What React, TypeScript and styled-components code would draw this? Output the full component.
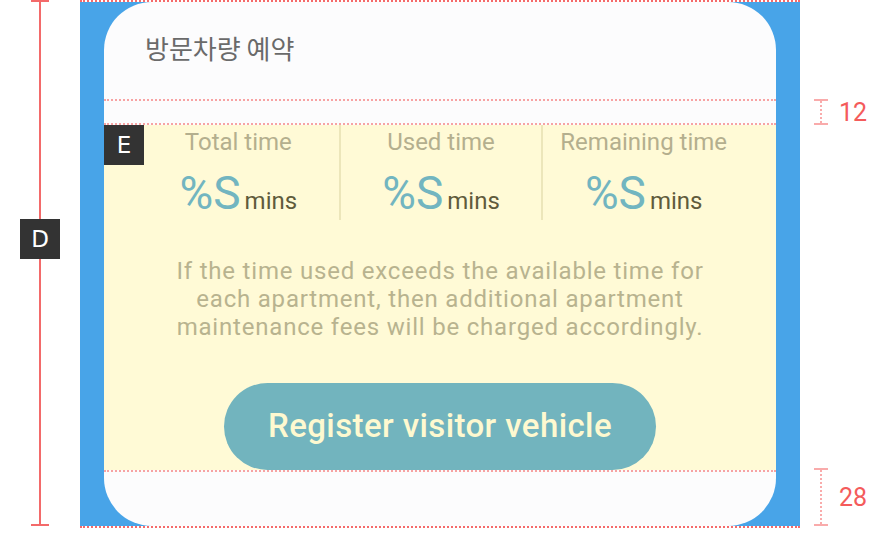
import React from "react";
import styled, { createGlobalStyle } from "styled-components";

const Global = createGlobalStyle`
  html, body { margin: 0; padding: 0; background: #ffffff; }
  body { font-family: Roboto, "Noto Sans", sans-serif; }
  * { box-sizing: border-box; }
`;

const Page = styled.div`
  display: flex;
  width: 880px;
  height: 540px;
  background: #ffffff;
  overflow: hidden;
`;

const LeftRuler = styled.div`
  width: 80px;
  height: 526px;
  display: flex;
  flex-direction: column;
  align-items: center;
`;

const RulerCap = styled.div`
  width: 18px;
  height: 2px;
  background: #f36a6a;
  flex: 0 0 auto;
`;

const RulerLine = styled.div<{ $h?: number }>`
  width: 2px;
  background: #f36a6a;
  flex: ${(p) => (p.$h ? `0 0 ${p.$h}px` : "1 1 auto")};
`;

const Tag = styled.div`
  width: 40px;
  height: 40px;
  background: #333333;
  color: #ffffff;
  display: flex;
  align-items: center;
  justify-content: center;
  font-family: "DejaVu Sans", "Noto Sans", sans-serif;
  font-size: 23px;
  flex: 0 0 auto;
`;

const CornerTag = styled(Tag)`
  position: absolute;
  left: 0;
  top: 0;
`;

const Frame = styled.div`
  width: 720px;
  height: 528px;
  background: #48a4e8;
  background-clip: padding-box;
  border-top: 2px dotted #f56a6a;
  border-bottom: 2px dotted #f56a6a;
  padding: 0 24px;
  display: flex;
`;

const Card = styled.div`
  width: 672px;
  height: 524px;
  background: #fcfcfd;
  border-radius: 48px;
  overflow: hidden;
  display: flex;
  flex-direction: column;
`;

const Header = styled.div`
  flex: 0 0 99px;
  display: flex;
  align-items: center;
  padding: 0 0 6px 41px;
  border-bottom: 2px dotted #f7a3a3;
  font-family: "Noto Sans CJK KR", "Noto Sans", sans-serif;
  font-size: 26px;
  color: #6a6a6a;
`;

const Gap = styled.div`
  flex: 0 0 24px;
  border-bottom: 2px dotted #f7a3a3;
`;

const Body = styled.div`
  position: relative;
  flex: 0 0 346px;
  background: #fffad6;
  border-bottom: 2px dotted #f7a3a3;
  background-clip: padding-box;
  display: flex;
  flex-direction: column;
  align-items: center;
  padding: 0 32px;
`;

const Stats = styled.div`
  display: flex;
  width: 100%;
  height: 95px;
`;

const Stat = styled.div<{ $divider?: boolean }>`
  flex: 1 1 0;
  display: flex;
  flex-direction: column;
  align-items: center;
  padding-top: 2px;
  border-left: ${(p) => (p.$divider ? "2px solid #ece6ba" : "2px solid transparent")};
`;

const StatLabel = styled.div`
  font-size: 24px;
  line-height: 30px;
  color: #b4af8e;
`;

const StatValue = styled.div`
  margin-top: 13px;
  line-height: 46px;
  white-space: nowrap;
`;

const Big = styled.span`
  font-size: 46px;
  color: #72b5c0;
`;

const Unit = styled.span`
  font-size: 24px;
  color: #5f5b3c;
  margin-left: 4px;
`;

const Notice = styled.p`
  margin: 37px 0 0;
  width: 550px;
  text-align: center;
  font-size: 24px;
  line-height: 28px;
  letter-spacing: 0.8px;
  color: #b8b38f;
`;

const RegisterButton = styled.button`
  margin-top: 42px;
  width: 432px;
  height: 87px;
  border: none;
  border-radius: 44px;
  background: #72b4be;
  color: #fef9d0;
  font-family: Roboto, "Noto Sans", sans-serif;
  font-weight: 500;
  font-size: 33px;
  letter-spacing: 0.4px;
  padding: 0 0 2px;
  cursor: pointer;
`;

const Footer = styled.div`
  flex: 1 1 auto;
`;

const RightRuler = styled.div`
  width: 80px;
  height: 526px;
  display: flex;
  flex-direction: column;
`;

const Spacer = styled.div<{ $h?: number }>`
  flex: ${(p) => (p.$h ? `0 0 ${p.$h}px` : "1 1 auto")};
`;

const Measure = styled.div<{ $h: number }>`
  height: ${(p) => p.$h}px;
  display: flex;
  align-items: center;
  padding-left: 14px;
`;

const IBar = styled.div`
  width: 14px;
  height: 100%;
  display: flex;
  flex-direction: column;
  align-items: center;
`;

const IBarCap = styled.div`
  width: 14px;
  height: 2px;
  background: #f9abab;
`;

const IBarStem = styled.div`
  flex: 1 1 auto;
  border-left: 2px dotted #f9abab;
`;

const MeasureText = styled.span`
  margin-left: 11px;
  font-family: Roboto, "Noto Sans", sans-serif;
  font-size: 25px;
  color: #f45b5b;
`;

const stats = [
  { label: "Total time" },
  { label: "Used time" },
  { label: "Remaining time" },
];

export default function App() {
  return (
    <Page>
      <Global />
      <LeftRuler>
        <RulerCap />
        <RulerLine $h={217} />
        <Tag>D</Tag>
        <RulerLine />
        <RulerCap />
      </LeftRuler>
      <Frame>
        <Card>
          <Header>방문차량 예약</Header>
          <Gap />
          <Body>
            <CornerTag>E</CornerTag>
            <Stats>
              {stats.map((s, i) => (
                <Stat key={s.label} $divider={i > 0}>
                  <StatLabel>{s.label}</StatLabel>
                  <StatValue>
                    <Big>%S</Big>
                    <Unit>mins</Unit>
                  </StatValue>
                </Stat>
              ))}
            </Stats>
            <Notice>
              If the time used exceeds the available time for each apartment, then additional apartment
              maintenance fees will be charged accordingly.
            </Notice>
            <RegisterButton>Register visitor vehicle</RegisterButton>
          </Body>
          <Footer />
        </Card>
      </Frame>
      <RightRuler>
        <Spacer $h={99} />
        <Measure $h={26}>
          <IBar>
            <IBarCap />
            <IBarStem />
            <IBarCap />
          </IBar>
          <MeasureText>12</MeasureText>
        </Measure>
        <Spacer />
        <Measure $h={58}>
          <IBar>
            <IBarCap />
            <IBarStem />
            <IBarCap />
          </IBar>
          <MeasureText>28</MeasureText>
        </Measure>
      </RightRuler>
    </Page>
  );
}
